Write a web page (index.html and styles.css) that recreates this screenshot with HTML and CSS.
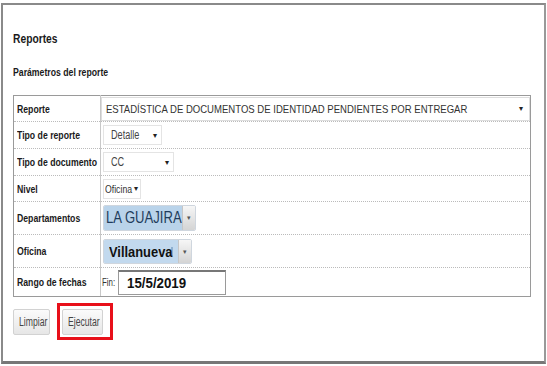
FILE: index.html
```html
<!DOCTYPE html>
<html>

<head>
    <meta charset="UTF-8">
    <title>Reportes</title>
    <link rel="stylesheet" href="styles.css">
</head>

<body>
    <div class="frame">
        <h1><span class="nr">Reportes</span></h1>
        <h2><span class="nr">Parámetros del reporte</span></h2>

        <!-- report parameters -->
        <table class="params">
            <tr class="row-report">
                <th><span class="nr">Reporte</span></th>
                <td>
                    <div class="sel sel-full">
                        <span class="nr nr-report">ESTADÍSTICA DE DOCUMENTOS DE IDENTIDAD PENDIENTES POR ENTREGAR</span>
                        <span class="arrow">&#9662;</span>
                    </div>
                </td>
            </tr>
            <tr class="row-a">
                <th><span class="nr">Tipo de reporte</span></th>
                <td>
                    <div class="sel sel-detalle"><span class="nr nr-sel">Detalle</span><span class="arrow">&#9662;</span></div>
                </td>
            </tr>
            <tr class="row-a">
                <th><span class="nr">Tipo de documento</span></th>
                <td>
                    <div class="sel sel-cc"><span class="nr nr-sel">CC</span><span class="arrow">&#9662;</span></div>
                </td>
            </tr>
            <tr>
                <th><span class="nr">Nivel</span></th>
                <td>
                    <div class="sel sel-nivel"><span class="nr nr-nivel">Oficina</span><span class="arrow">&#9662;</span></div>
                </td>
            </tr>
            <tr class="row-big">
                <th><span class="nr">Departamentos</span></th>
                <td>
                    <div class="combo combo-dep">
                        <span class="combo-text"><span class="nr nr-dep">LA GUAJIRA</span></span>
                        <span class="combo-btn">&#9662;</span>
                    </div>
                </td>
            </tr>
            <tr class="row-big">
                <th><span class="nr">Oficina</span></th>
                <td>
                    <div class="combo combo-ofi">
                        <span class="combo-text"><span class="nr nr-ofi">Villanueva</span><span class="caret"></span></span>
                        <span class="combo-btn">&#9662;</span>
                    </div>
                </td>
            </tr>
            <tr class="row-date">
                <th><span class="nr">Rango de fechas</span></th>
                <td>
                    <div class="date">
                        <span class="fin"><span class="nr">Fin:</span></span>
                        <span class="date-input"><span class="nr nr-date">15/5/2019</span></span>
                    </div>
                </td>
            </tr>
        </table>

        <div class="actions">
            <button class="btn btn-clear"><span class="nr nr-btn">Limpiar</span></button>
            <div class="highlight">
                <button class="btn btn-run"><span class="nr nr-btn">Ejecutar</span></button>
            </div>
        </div>
    </div>
</body>

</html>
```

FILE: styles.css
```css
/* Basic reset */
* {
    margin: 0;
    padding: 0;
    box-sizing: border-box;
}

body {
    background-color: #fff;
    color: #222;
    font-family: "Liberation Sans", Arial, sans-serif;
}

/* narrow text: the original uses a condensed face */
.nr {
    display: inline-block;
    white-space: nowrap;
    transform: scaleX(0.79);
    transform-origin: 0 50%;
}

.frame {
    margin: 3px 0 0 1px;
    width: 545px;
    height: 361px;
    border: 2px solid #8a8a8a;
    border-right-color: #999;
    border-bottom: 3px solid #777;
    padding: 26px 10px 0 10px;
}

h1 {
    font-size: 13px;
    font-weight: bold;
    color: #1a1a1a;
    line-height: 16px;
}

h2 {
    font-size: 11px;
    font-weight: bold;
    color: #1a1a1a;
    line-height: 14px;
    margin-top: 18px;
}

.params {
    margin-top: 16px;
    width: 518px;
    table-layout: fixed;
    border-collapse: collapse;
    border: 1px solid #9a9a9a;
    font-size: 11px;
}

.params th {
    width: 87px;
    text-align: left;
    font-weight: bold;
    color: #1a1a1a;
    padding: 0 3px;
    border-right: 1px solid #c8c8c8;
    border-bottom: 1px dotted #bbb;
    height: 26px;
    overflow: hidden;
}

.params td {
    padding: 0 2px;
    border-bottom: 1px dotted #bbb;
}

.params .row-report td {
    padding: 0;
}

.params .row-a th,
.params .row-a td {
    height: 27px;
}

.params .row-big th,
.params .row-big td {
    height: 33px;
}

.params .row-date th,
.params .row-date td {
    height: 29px;
    border-bottom: 1px solid #9a9a9a;
}

.params .row-date td {
    padding: 0 1px;
}

/* plain drop downs */
.sel {
    display: inline-flex;
    align-items: center;
    justify-content: space-between;
    height: 20px;
    padding: 0 4px 0 7px;
    border: 1px solid #e4e4e4;
    color: #444;
    font-size: 12px;
    overflow: hidden;
}

.sel .arrow {
    flex: none;
    font-size: 8px;
    color: #222;
}

.sel .nr {
    flex: 1 1 0;
    min-width: 0;
}

.sel-full {
    display: flex;
    width: 100%;
    height: 24px;
    padding: 0 6px 0 4px;
    font-size: 11.5px;
    color: #333;
    border-color: #ddd;
}

.nr-report {
    transform: scaleX(0.83);
}

.nr-sel {
    transform: scaleX(0.76);
}

.sel-detalle {
    width: 59px;
}

.sel-cc {
    width: 71px;
}

.sel-nivel {
    width: 38px;
    padding: 0 2px 0 1px;
    font-size: 11px;
    color: #333;
}

/* combo boxes with selected text */
.combo {
    display: inline-flex;
    align-items: stretch;
    height: 26px;
    border: 1px solid #cfd6de;
    border-radius: 2px;
    overflow: hidden;
    vertical-align: middle;
}

.combo-text {
    display: flex;
    align-items: center;
    background-color: #b9d3ea;
    color: #1f3d5c;
    padding: 0 2px;
    overflow: hidden;
}

.combo-btn {
    display: flex;
    align-items: center;
    justify-content: center;
    width: 13px;
    background: linear-gradient(#f6f6f6, #d4d4d4);
    border-left: 1px solid #c6c6c6;
    font-size: 7px;
    color: #555;
}

.combo-dep .combo-text {
    width: 78px;
    font-size: 17px;
}

.nr-dep {
    transform: scaleX(0.77);
}

.combo-ofi {
    height: 25px;
    margin-top: 1px;
}

.combo-ofi .combo-text {
    width: 74px;
    font-size: 14px;
    font-weight: bold;
    color: #111;
    padding-left: 5px;
    background-color: #c2d9ee;
}

.nr-ofi {
    flex: 1 1 0;
    min-width: 0;
    transform: scaleX(0.92);
}

.caret {
    width: 2px;
    height: 9px;
    margin-right: 3px;
    background-color: #8fb0d0;
}

/* date field */
.date {
    display: flex;
    align-items: center;
    gap: 3px;
}

.fin {
    width: 13px;
    font-size: 10px;
    color: #333;
}

.date-input {
    display: flex;
    align-items: center;
    width: 108px;
    height: 25px;
    padding-left: 8px;
    border: 1px solid #9a9a9a;
    border-top: 2px solid #777;
    font-size: 14px;
    font-weight: bold;
    color: #111;
}

.nr-date {
    transform: scaleX(0.95);
}

/* buttons */
.actions {
    display: flex;
    align-items: center;
    gap: 7px;
    margin-top: 6px;
}

.btn {
    display: flex;
    align-items: center;
    height: 26px;
    padding: 0 5px;
    font-family: inherit;
    font-size: 12px;
    color: #444;
    background: linear-gradient(#fbfbfb, #e6e6e6);
    border: 1px solid #d2d2d2;
    border-radius: 2px;
    overflow: hidden;
}

.btn-clear {
    width: 37px;
}

.btn-run {
    width: 41px;
}

.nr-btn {
    transform: scaleX(0.72);
}

.highlight {
    padding: 3px 7px 2px 2px;
    border: 3px solid #e8101a;
}
```
